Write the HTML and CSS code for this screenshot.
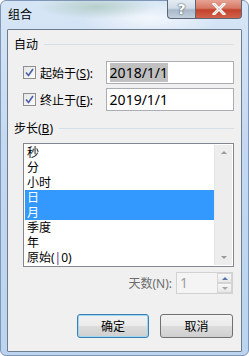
FILE: index.html
```html
<!DOCTYPE html>
<html lang="zh-CN">
<head>
    <meta charset="UTF-8">
    <title>组合</title>
    <link rel="stylesheet" href="styles.css">
</head>
<body>
    <div class="window">
        <div class="titlebar">
            <span class="title">组合</span>
            <div class="caption-buttons">
                <div class="cap-btn help">?</div>
                <div class="cap-btn close">
                    <svg width="14" height="12" viewBox="0 0 14 12">
                        <path d="M2 1 L12 11 M12 1 L2 11" stroke="#fff" stroke-width="3" stroke-linecap="square"/>
                        <path d="M2 1 L12 11 M12 1 L2 11" stroke="#7a3a30" stroke-width="0.6" fill="none" opacity="0.4"/>
                    </svg>
                </div>
            </div>
        </div>
        <div class="client">
            <div class="group-head"><span>自动</span><div class="rule"></div></div>
            <div class="field-row">
                <span class="check"><svg width="9" height="9" viewBox="0 0 9 9"><path d="M1 4.5 L3.5 7.5 L8 1" stroke="#4a5fa8" stroke-width="1.6" fill="none"/></svg></span>
                <label class="field-label">起始于(<u>S</u>):</label>
                <div class="textbox"><span class="sel">2018/1/1</span></div>
            </div>
            <div class="field-row">
                <span class="check"><svg width="9" height="9" viewBox="0 0 9 9"><path d="M1 4.5 L3.5 7.5 L8 1" stroke="#4a5fa8" stroke-width="1.6" fill="none"/></svg></span>
                <label class="field-label">终止于(<u>E</u>):</label>
                <div class="textbox">2019/1/1</div>
            </div>
            <div class="group-head step"><span>步长(<u>B</u>)</span><div class="rule"></div></div>
            <div class="listbox">
                <ul class="items">
                    <li>秒</li>
                    <li>分</li>
                    <li>小时</li>
                    <li class="selected">日</li>
                    <li class="selected">月</li>
                    <li>季度</li>
                    <li>年</li>
                    <li>原始(<span class="caret">|</span>0)</li>
                </ul>
                <div class="scrollbar">
                    <span class="arrow up"></span>
                    <span class="arrow down"></span>
                </div>
            </div>
            <div class="days-row">
                <span class="days-label">天数(N):</span>
                <div class="spin">
                    <span class="spin-value">1</span>
                    <div class="spin-buttons">
                        <div class="spin-btn"><span class="tri up"></span></div>
                        <div class="spin-btn"><span class="tri down"></span></div>
                    </div>
                </div>
            </div>
            <div class="buttons">
                <button class="btn default">确定</button>
                <button class="btn">取消</button>
            </div>
        </div>
    </div>
</body>
</html>
```

FILE: styles.css
```css
html, body {
    margin: 0;
    padding: 0;
}
body {
    width: 249px;
    height: 356px;
    overflow: hidden;
    font-family: "Noto Sans", "Noto Sans CJK SC", sans-serif;
    font-size: 12px;
    color: #000;
}
.window {
    width: 249px;
    height: 356px;
    box-sizing: border-box;
    background:
        radial-gradient(ellipse 60px 12px at 95px 6px, rgba(150,185,160,0.5), transparent),
        radial-gradient(ellipse 70px 18px at 150px 18px, rgba(255,255,255,0.7), transparent),
        linear-gradient(180deg, #d7e6f6 0%, #c4d9f1 40%, #bcd4ef 100%);
    border: 1px solid #7f97b5;
    border-radius: 6px;
    display: flex;
    flex-direction: column;
}
.titlebar {
    height: 28px;
    display: flex;
    justify-content: space-between;
    align-items: flex-start;
}
.title {
    margin: 6px 0 0 7px;
    line-height: 16px;
}
.caption-buttons {
    display: flex;
    margin-right: 6px;
    margin-top: -1px;
}
.cap-btn {
    height: 19px;
    box-sizing: border-box;
    border: 1px solid #5b6777;
    border-top: none;
    display: flex;
    align-items: center;
    justify-content: center;
}
.help {
    width: 28px;
    border-right: none;
    border-radius: 0 0 0 4px;
    background: linear-gradient(180deg, #e4ebf2 0%, #d2dce8 45%, #a9b8c9 55%, #c3d0dd 100%);
    color: #fff;
    font-family: "DejaVu Sans", sans-serif;
    font-weight: bold;
    font-size: 14px;
    text-shadow: 0 0 2px #4a5866, 0 0 1px #4a5866;
}
.close {
    width: 47px;
    border-radius: 0 0 4px 0;
    background: linear-gradient(180deg, #e6a395 0%, #d77a66 45%, #c2432c 55%, #d1624a 100%);
}
.client {
    margin: 0 6px 3px 6px;
    flex: 1;
    border: 1px solid #6e7d8e;
    border-radius: 1px;
    background: #f0f0f0;
    padding: 0 7px 0 6px;
    display: flex;
    flex-direction: column;
}
.group-head {
    display: flex;
    align-items: center;
    height: 16px;
    margin-top: 6px;
}
.group-head .rule {
    flex: 1;
    height: 1px;
    background: #d5dfe5;
    margin-left: 6px;
    margin-right: 0;
}
.group-head.step {
    margin-top: 9px;
}
.field-row {
    display: flex;
    align-items: center;
    margin-top: 9px;
    height: 23px;
}
.field-row + .field-row {
    margin-top: 4px;
}
.check {
    width: 13px;
    height: 13px;
    box-sizing: border-box;
    border: 1px solid #8f8f8f;
    background: linear-gradient(135deg, #e6e6e6, #fbfbfb);
    margin-left: 9px;
    display: flex;
    align-items: center;
    justify-content: center;
}
.field-label {
    margin-left: 4px;
    width: 66px;
}
.textbox {
    width: 129px;
    height: 23px;
    box-sizing: border-box;
    border: 1px solid #abadb3;
    background: #fff;
    font-size: 14px;
    line-height: 21px;
    padding-left: 3px;
}
.sel {
    background: #c0c0c0;
}
.listbox {
    margin-top: 7px;
    margin-left: 9px;
    height: 124px;
    box-sizing: border-box;
    border: 1px solid #828790;
    background: #fff;
    padding: 1px;
    display: flex;
}
.items {
    list-style: none;
    margin: 0;
    padding: 0;
    flex: 1;
}
.items li {
    height: 15px;
    line-height: 15px;
    padding-left: 2px;
}
.items li.selected {
    background: #3399ff;
    color: #fff;
}
.caret {
    color: #6a2c90;
}
.scrollbar {
    width: 17px;
    background: #ededed;
    border-left: 1px solid #e6e6e6;
    display: flex;
    flex-direction: column;
    justify-content: space-between;
    align-items: center;
    padding: 6px 0;
}
.arrow {
    width: 0;
    height: 0;
    border-left: 3px solid transparent;
    border-right: 3px solid transparent;
}
.arrow.up {
    border-bottom: 3px solid #9a9a9a;
}
.arrow.down {
    border-top: 3px solid #9a9a9a;
}
.days-row {
    display: flex;
    justify-content: flex-end;
    align-items: center;
    margin-top: 5px;
    margin-right: 1px;
}
.days-label {
    color: #6d6d6d;
    margin-right: 4px;
}
.spin {
    width: 57px;
    height: 22px;
    box-sizing: border-box;
    border: 1px solid #d2d2d2;
    background: #f4f4f4;
    display: flex;
}
.spin-value {
    flex: 1;
    color: #a0a0a0;
    font-size: 14px;
    line-height: 20px;
    padding-left: 3px;
}
.spin-buttons {
    width: 15px;
    display: flex;
    flex-direction: column;
}
.spin-btn {
    flex: 1;
    border: 1px solid #d5d5d5;
    background: linear-gradient(180deg, #f8f8f8, #e8e8e8);
    display: flex;
    align-items: center;
    justify-content: center;
}
.tri {
    width: 0;
    height: 0;
    border-left: 3px solid transparent;
    border-right: 3px solid transparent;
}
.tri.up {
    border-bottom: 3px solid #5574a8;
}
.tri.down {
    border-top: 3px solid #a8a8a8;
}
.buttons {
    display: flex;
    justify-content: flex-end;
    gap: 11px;
    margin-top: 20px;
    margin-right: 1px;
}
.btn {
    width: 72px;
    height: 24px;
    box-sizing: border-box;
    border: 1px solid #707070;
    border-radius: 3px;
    background: linear-gradient(180deg, #f2f2f2 0%, #ebebeb 50%, #dddddd 51%, #cfcfcf 100%);
    font-family: "Noto Sans", "Noto Sans CJK SC", sans-serif;
    font-size: 12px;
    padding: 0;
    color: #000;
}
.btn + .btn {
    width: 73px;
}
.btn.default {
    border-color: #3c7fb1;
    box-shadow: inset 0 0 0 1px #9ed6f3;
}
```
